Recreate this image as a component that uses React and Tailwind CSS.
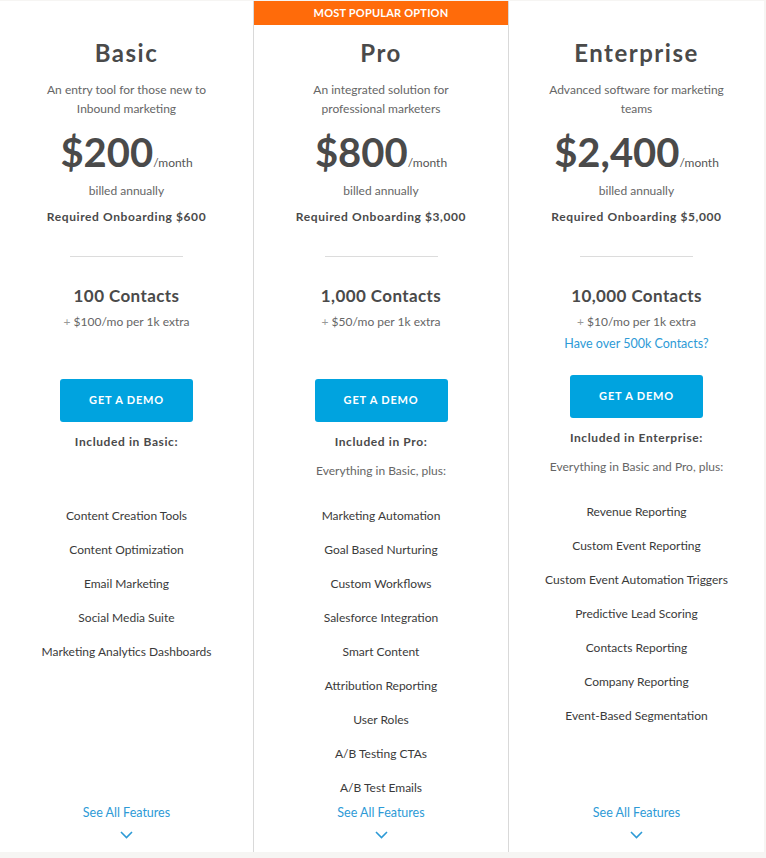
import React from 'react';

const plans = [
  {
    name: 'Basic',
    width: 'w-[253px]',
    desc: ['An entry tool for those new to', 'Inbound marketing'],
    price: '$200',
    onboarding: 'Required Onboarding $600',
    contacts: '100 Contacts',
    extra: '$100/mo per 1k extra',
    included: 'Included in Basic:',
    plus: null,
    features: [
      'Content Creation Tools',
      'Content Optimization',
      'Email Marketing',
      'Social Media Suite',
      'Marketing Analytics Dashboards',
    ],
  },
  {
    name: 'Pro',
    width: 'w-[256px]',
    popular: true,
    desc: ['An integrated solution for', 'professional marketers'],
    price: '$800',
    onboarding: 'Required Onboarding $3,000',
    contacts: '1,000 Contacts',
    extra: '$50/mo per 1k extra',
    included: 'Included in Pro:',
    plus: 'Everything in Basic, plus:',
    features: [
      'Marketing Automation',
      'Goal Based Nurturing',
      'Custom Workflows',
      'Salesforce Integration',
      'Smart Content',
      'Attribution Reporting',
      'User Roles',
      'A/B Testing CTAs',
      'A/B Test Emails',
    ],
  },
  {
    name: 'Enterprise',
    width: 'flex-1',
    desc: ['Advanced software for marketing', 'teams'],
    price: '$2,400',
    onboarding: 'Required Onboarding $5,000',
    contacts: '10,000 Contacts',
    extra: '$10/mo per 1k extra',
    link: 'Have over 500k Contacts?',
    included: 'Included in Enterprise:',
    plus: 'Everything in Basic and Pro, plus:',
    features: [
      'Revenue Reporting',
      'Custom Event Reporting',
      'Custom Event Automation Triggers',
      'Predictive Lead Scoring',
      'Contacts Reporting',
      'Company Reporting',
      'Event-Based Segmentation',
    ],
  },
];

function Chevron() {
  return (
    <svg width="13" height="8" viewBox="0 0 13 8" fill="none" className="mt-[9px]">
      <path d="M1 1l5.5 5.5L12 1" stroke="#2d9ad6" strokeWidth="1.6" />
    </svg>
  );
}

function PlanColumn({ plan }) {
  return (
    <div
      className={`${plan.width} shrink-0 flex flex-col items-center text-center ${
        plan.popular ? 'border-x border-[#d9d9d9]' : ''
      }`}
    >
      {plan.popular ? (
        <div className="w-full h-6 bg-[#ff6b0a] text-white text-[11px] font-bold leading-6 tracking-[0.2px]">
          MOST POPULAR OPTION
        </div>
      ) : (
        <div className="h-6" />
      )}

      <h2 className="mt-3 text-[24px] leading-8 font-bold tracking-[1.5px] text-[#4a4a4a]">{plan.name}</h2>
      <div className="mt-[11px] text-[12px] leading-[19px] text-[#666]">
        {plan.desc.map((d) => (
          <div key={d}>{d}</div>
        ))}
      </div>

      <div className="mt-[10px] h-12 flex items-baseline text-[#4a4a4a]">
        <span className="text-[40px] leading-[48px] font-bold">{plan.price}</span>
        <span className="text-[12px] text-[#555]">/month</span>
      </div>
      <div className="mt-[5px] text-[12px] leading-[19px] text-[#666]">billed annually</div>
      <div className="mt-[7px] text-[12px] leading-[19px] font-bold tracking-[0.6px] text-[#4a4a4a]">
        {plan.onboarding}
      </div>

      <div className="mt-[30px] w-[113px] h-px bg-[#dcdcdc]" />

      <div className="mt-[27px] text-[17px] leading-6 font-bold tracking-[0.4px] text-[#4a4a4a]">
        {plan.contacts}
      </div>
      <div className="mt-[4px] text-[12px] leading-[19px] text-[#666]">
        <span className="text-[#999]">+</span> {plan.extra}
      </div>
      {plan.link && (
        <div className="mt-[3px] text-[12.5px] leading-[19px] text-[#2d9ad6]">{plan.link}</div>
      )}

      <button
        className={`${plan.link ? 'mt-[22px]' : 'mt-[48px]'} w-[133px] h-[43px] rounded-[3px] bg-[#00a3df] text-white text-[11px] font-bold tracking-[0.8px]`}
      >
        GET A DEMO
      </button>

      <div className="mt-[10px] text-[12px] leading-[19px] font-bold tracking-[0.6px] text-[#4a4a4a]">
        {plan.included}
      </div>
      <div className="mt-[10px] text-[12px] leading-[19px] text-[#666]">{plan.plus || '\u00a0'}</div>

      <ul className="mt-[26px] flex flex-col gap-[15px] text-[12px] leading-[19px] text-[#3a3a3a]">
        {plan.features.map((f) => (
          <li key={f}>{f}</li>
        ))}
      </ul>

      <div className="mt-auto pb-[13px] flex flex-col items-center">
        <a className="text-[12.5px] leading-[19px] text-[#2d9ad6]">See All Features</a>
        <Chevron />
      </div>
    </div>
  );
}

export default function App() {
  return (
    <div className="min-h-screen bg-[#f6f5f3] pt-px" style={{ fontFamily: 'Lato, "Noto Sans", sans-serif' }}>
      <div className="mr-[2px] h-[851px] bg-white flex">
        {plans.map((p) => (
          <PlanColumn key={p.name} plan={p} />
        ))}
      </div>
    </div>
  );
}
